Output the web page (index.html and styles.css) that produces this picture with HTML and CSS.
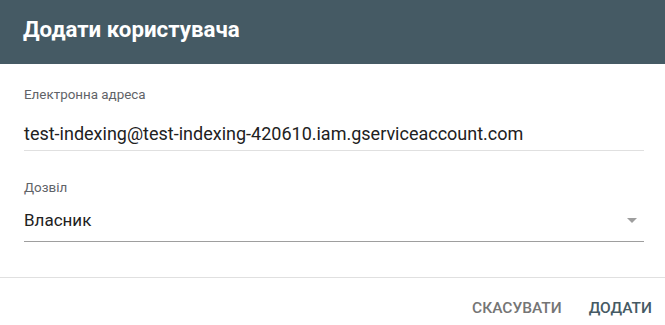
FILE: index.html
```html
<!DOCTYPE html>
<html>
<head>
    <meta charset="utf-8">
    <title>Додати користувача</title>
    <link rel="stylesheet" href="styles.css">
</head>
<body>
    <div class="dialog">
        <div class="dialog_header">Додати користувача</div>
        <div class="dialog_body">
            <div class="field">
                <div class="field_label">Електронна адреса</div>
                <div class="field_input">test-indexing@test-indexing-420610.iam.gserviceaccount.com</div>
            </div>
            <div class="field field_select">
                <div class="field_label">Дозвіл</div>
                <div class="field_input">
                    <span>Власник</span>
                    <span class="arrow"></span>
                </div>
            </div>
        </div>
        <div class="dialog_footer">
            <span class="btn btn_cancel">Скасувати</span>
            <span class="btn btn_ok">Додати</span>
        </div>
    </div>
</body>
</html>
```

FILE: styles.css
```css
body {
  margin: 0;
  background-color: #fff;
  font-family: Roboto, "Noto Sans", sans-serif;
}

.dialog {
  width: 665px;
  height: 325px;
  overflow: hidden;
}

.dialog_header {
  height: 64px;
  box-sizing: border-box;
  padding: 14px 23px 0;
  background-color: #455a64;
  color: #fff;
  font-size: 22.3px;
  font-weight: 700;
  line-height: 30px;
}

.dialog_body {
  padding: 22px 21px 0 24px;
  height: 191px;
  border-bottom: 1px solid #e0e0e0;
}

.field {
  margin-bottom: 28px;
}

.field_label {
  color: #5f6368;
  font-size: 13.4px;
  line-height: 18px;
}

.field_input {
  display: flex;
  align-items: center;
  justify-content: space-between;
  margin-top: 18px;
  padding-bottom: 4px;
  border-bottom: 1px solid #e0e0e0;
  color: #212121;
  font-size: 18px;
  line-height: 24px;
}

.field_select .field_input {
  margin-top: 11px;
  padding-bottom: 9px;
  border-bottom-color: #9e9e9e;
  font-size: 17px;
}

.arrow {
  width: 0;
  height: 0;
  margin-right: 7px;
  border-left: 5px solid transparent;
  border-right: 5px solid transparent;
  border-top: 5px solid #9e9e9e;
}

.dialog_footer {
  display: flex;
  justify-content: flex-end;
  gap: 27px;
  padding: 20px 13px 0 0;
}

.btn {
  font-size: 15.5px;
  font-weight: 500;
  line-height: 20px;
  text-transform: uppercase;
}

.btn_cancel {
  color: #757575;
}

.btn_ok {
  color: #455a64;
}
```
